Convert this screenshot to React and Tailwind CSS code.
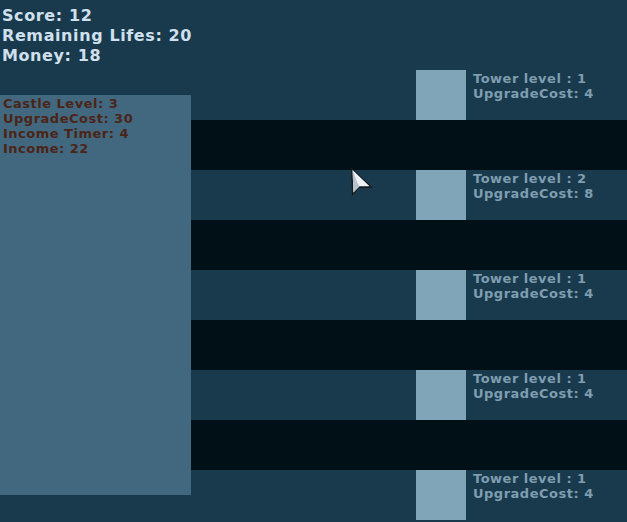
import React from "react";

const towers = [
  { level: 1, cost: 4 },
  { level: 2, cost: 8 },
  { level: 1, cost: 4 },
  { level: 1, cost: 4 },
  { level: 1, cost: 4 },
];

function TowerRow({ level, cost }) {
  return (
    <div className="h-[50px] flex">
      <div className="w-[225px]" />
      <div className="w-[50px] h-[50px] bg-[#80a4b8]" />
      <div className="pl-[7px] pt-[1px] text-[13px] leading-[15px] font-bold text-[#7f9db0] tracking-[0.5px]">
        <div>Tower level : {level}</div>
        <div>UpgradeCost: {cost}</div>
      </div>
    </div>
  );
}

export default function App() {
  return (
    <div
      className="relative w-[627px] h-[522px] bg-[#193a4c] overflow-hidden"
      style={{ fontFamily: '"DejaVu Sans", sans-serif' }}
    >
      <div className="h-[70px] pl-[2px] pt-[6px] text-[16px] leading-[20px] font-bold text-[#d0e0ee] tracking-[0.6px]">
        <div>Score: 12</div>
        <div>Remaining Lifes: 20</div>
        <div>Money: 18</div>
      </div>
      <div className="flex">
        <div className="w-[191px] pt-[25px]">
          <div className="h-[400px] bg-[#41687e] pl-[3px] pt-[1px] text-[13px] leading-[15px] font-bold text-[#4b2418] tracking-[0.5px]">
            <div>Castle Level: 3</div>
            <div>UpgradeCost: 30</div>
            <div>Income Timer: 4</div>
            <div>Income: 22</div>
          </div>
        </div>
        <div className="flex-1 flex flex-col">
          {towers.map((t, i) => (
            <React.Fragment key={i}>
              <TowerRow level={t.level} cost={t.cost} />
              {i < towers.length - 1 && <div className="h-[50px] bg-[#010f17]" />}
            </React.Fragment>
          ))}
        </div>
      </div>
      <svg
        className="absolute left-[349px] top-[166px]"
        width="26"
        height="32"
        viewBox="0 0 26 32"
      >
        <path d="M2 1 L3 30 L10 22 L24 22 Z" fill="#151b20" />
        <path d="M3.6 4 L4.4 26.5 L10.4 20.3 L20.5 20.3 Z" fill="#eef2f6" />
        <path d="M3.6 4 L4.4 26.5 L10.4 20.3 L8 16 Z" fill="#b4c2ce" />
      </svg>
    </div>
  );
}
